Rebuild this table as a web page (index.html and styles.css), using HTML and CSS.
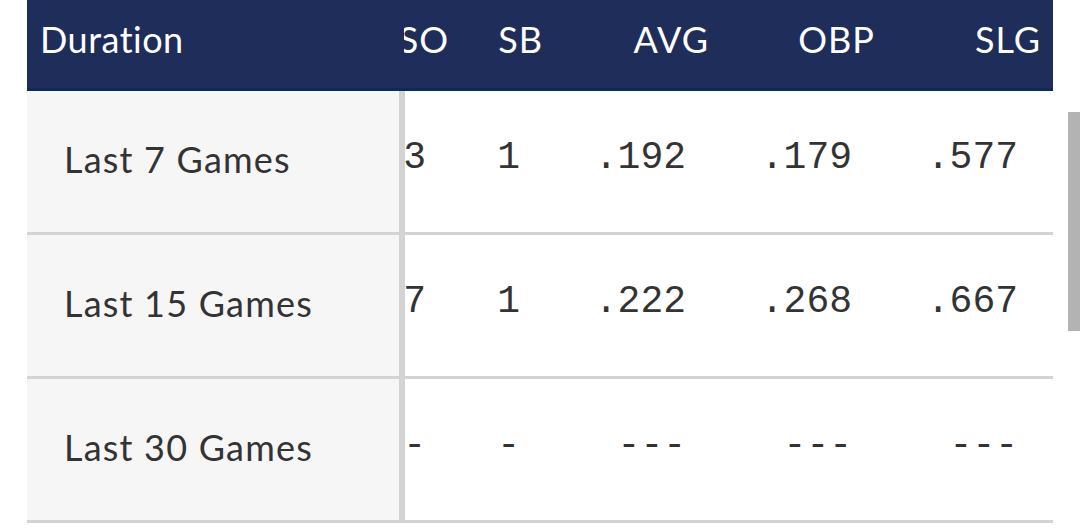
FILE: index.html
```html
<!DOCTYPE html>
<html lang="en">
<head>
<meta charset="utf-8">
<title>Splits</title>
<link rel="stylesheet" href="styles.css">
</head>
<body>
<div class="page">
  <div class="table">
    <div class="row head">
      <div class="label">Duration</div>
      <div class="stats">
        <div class="cell w94">SO</div>
        <div class="cell w94">SB</div>
        <div class="cell w166">AVG</div>
        <div class="cell w166">OBP</div>
        <div class="cell w166">SLG</div>
      </div>
    </div>
    <div class="row">
      <div class="label">Last 7 Games</div>
      <div class="stats">
        <div class="cell w94">3</div>
        <div class="cell w94">1</div>
        <div class="cell w166">.192</div>
        <div class="cell w166">.179</div>
        <div class="cell w166">.577</div>
      </div>
    </div>
    <div class="row">
      <div class="label">Last 15 Games</div>
      <div class="stats">
        <div class="cell w94">7</div>
        <div class="cell w94">1</div>
        <div class="cell w166">.222</div>
        <div class="cell w166">.268</div>
        <div class="cell w166">.667</div>
      </div>
    </div>
    <div class="row">
      <div class="label">Last 30 Games</div>
      <div class="stats">
        <div class="cell w94">-</div>
        <div class="cell w94">-</div>
        <div class="cell w166">---</div>
        <div class="cell w166">---</div>
        <div class="cell w166">---</div>
      </div>
    </div>
  </div>
  <div class="scrollbar"></div>
</div>
</body>
</html>
```

FILE: styles.css
```css
html, body {
  margin: 0;
  padding: 0;
  background: #ffffff;
}

.page {
  width: 1080px;
  height: 529px;
  overflow: hidden;
}

.table {
  margin-left: 27px;
  width: 1026px;
  display: flex;
  flex-direction: column;
}

.row {
  display: flex;
  height: 141px;
  border-bottom: 3px solid #d3d3d3;
}

.label {
  flex: 0 0 auto;
  box-sizing: border-box;
  width: 378px;
  padding-left: 37px;
  padding-bottom: 5px;
  background: #f6f6f6;
  border-right: 6px solid #d3d3d3;
  display: flex;
  align-items: center;
  font-family: "Lato", "Noto Sans", sans-serif;
  font-size: 36px;
  letter-spacing: 1.2px;
  color: #333333;
  white-space: nowrap;
}

.stats {
  flex: 1 1 auto;
  min-width: 0;
  overflow: hidden;
  display: flex;
  justify-content: flex-end;
}

.cell {
  flex: 0 0 auto;
  box-sizing: border-box;
  display: flex;
  align-items: center;
  justify-content: flex-end;
  padding-right: 35px;
  padding-bottom: 8px;
  font-family: "Liberation Mono", "DejaVu Sans Mono", monospace;
  font-size: 38px;
  color: #333333;
  white-space: pre;
}

.w94 { width: 94px; }
.w166 { width: 166px; }

.head {
  height: 88px;
  background: #1f2d5a;
  border-bottom: 3px solid #0c2b5c;
}

.head .label {
  width: 377px;
  padding-left: 13px;
  padding-bottom: 10px;
  background: transparent;
  border-right: none;
  color: #ffffff;
  font-size: 36px;
  letter-spacing: 0.5px;
}

.head .cell {
  padding-right: 12px;
  padding-bottom: 10px;
  font-family: "Lato", "Noto Sans", sans-serif;
  font-size: 36px;
  letter-spacing: 1px;
  color: #ffffff;
}

.scrollbar {
  position: absolute;
  left: 1068px;
  top: 112px;
  width: 12px;
  height: 219px;
  background: #b3b3b3;
}
```
